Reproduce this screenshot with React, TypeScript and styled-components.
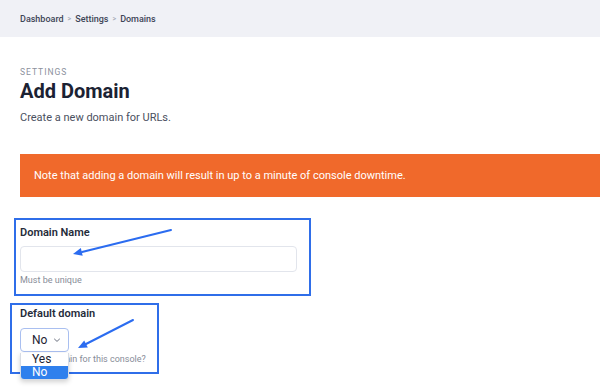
import React from "react";
import styled, { createGlobalStyle } from "styled-components";

const Global = createGlobalStyle`
  html, body { margin: 0; padding: 0; background: #ffffff; }
  body { font-family: Roboto, "Noto Sans", "Liberation Sans", sans-serif; color: #1c2233; }
  * { box-sizing: border-box; }
`;

const Page = styled.div`
  position: relative;
  width: 600px;
  height: 387px;
  overflow: hidden;
`;

const TopBar = styled.header`
  height: 37px;
  background: #f0f1f6;
  display: flex;
  align-items: center;
  padding-left: 20px;
  gap: 4px;
  font-size: 9px;
  font-weight: 500;
  color: #3e4556;
`;

const Crumb = styled.span``;

const Sep = styled.span`
  color: #a7acb8;
  font-size: 7px;
`;

const Main = styled.main`
  padding-left: 20px;
  display: flex;
  flex-direction: column;
`;

const Eyebrow = styled.div`
  margin-top: 30px;
  font-size: 8.5px;
  letter-spacing: 1px;
  color: #8b909c;
  text-transform: uppercase;
  line-height: 10px;
`;

const Title = styled.h1`
  margin: 2px 0 0;
  font-size: 20px;
  line-height: 24px;
  font-weight: 700;
  color: #1b2233;
`;

const Subtitle = styled.p`
  margin: 8px 0 0;
  font-size: 11px;
  line-height: 14px;
  color: #4a5060;
`;

const Banner = styled.div`
  margin-top: 29px;
  height: 43px;
  background: #f0692b;
  color: #ffffff;
  display: flex;
  align-items: center;
  padding-left: 14px;
  font-size: 11px;
`;

const Highlight = styled.div<{ $left: number; $top: number; $width: number; $pad: string }>`
  position: relative;
  margin-left: ${(p) => p.$left}px;
  margin-top: ${(p) => p.$top}px;
  width: ${(p) => p.$width}px;
  border: 2px solid #2f6ee9;
  padding: ${(p) => p.$pad};
  display: flex;
  flex-direction: column;
  align-items: flex-start;
`;

const Label = styled.label`
  font-size: 11px;
  line-height: 14px;
  font-weight: 600;
  color: #262c3a;
`;

const TextInput = styled.input`
  margin-top: 6px;
  width: 277px;
  height: 26px;
  border: 1px solid #e2e5ec;
  border-radius: 4px;
  outline: none;
  background: #fff;
`;

const Hint = styled.div<{ $gap: number }>`
  margin-top: ${(p) => p.$gap}px;
  font-size: 9px;
  line-height: 12px;
  color: #878c98;
  white-space: nowrap;
`;

const SelectWrap = styled.div`
  position: relative;
  margin-top: 7px;
`;

const SelectBox = styled.div`
  width: 49px;
  height: 24px;
  border: 1px solid #a9bff0;
  border-radius: 4px;
  display: flex;
  align-items: center;
  justify-content: space-between;
  padding: 0 7px 0 11px;
  font-size: 12px;
  color: #1e2432;
  background: #fff;
`;

const Menu = styled.ul`
  position: absolute;
  top: 25px;
  left: 0;
  width: 49px;
  margin: 0;
  padding: 0;
  list-style: none;
  background: #fff;
  border: 1px solid #d8dce4;
  border-top: none;
  border-radius: 0 0 4px 4px;
  box-shadow: 0 2px 5px rgba(0, 0, 0, 0.18);
  z-index: 2;
`;

const Option = styled.li<{ $active?: boolean }>`
  height: 13px;
  line-height: 13px;
  padding-left: 11px;
  font-size: 12px;
  color: ${(p) => (p.$active ? "#ffffff" : "#1e2432")};
  background: ${(p) => (p.$active ? "#2f80ed" : "transparent")};
  border-radius: ${(p) => (p.$active ? "0 0 3px 3px" : "0")};
`;

const Arrows = styled.svg`
  position: absolute;
  left: 0;
  top: 0;
  width: 600px;
  height: 387px;
  pointer-events: none;
  z-index: 5;
`;

function Chevron() {
  return (
    <svg width="8" height="6" viewBox="0 0 8 6">
      <path d="M1.2 1.8 L4 4.4 L6.8 1.8" fill="none" stroke="#6b7180" strokeWidth="1" />
    </svg>
  );
}

export default function App() {
  return (
    <Page>
      <Global />
      <TopBar>
        <Crumb>Dashboard</Crumb>
        <Sep>&gt;</Sep>
        <Crumb>Settings</Crumb>
        <Sep>&gt;</Sep>
        <Crumb>Domains</Crumb>
      </TopBar>
      <Main>
        <Eyebrow>Settings</Eyebrow>
        <Title>Add Domain</Title>
        <Subtitle>Create a new domain for URLs.</Subtitle>
        <Banner>Note that adding a domain will result in up to a minute of console downtime.</Banner>
        <Highlight $left={-6} $top={21} $width={297} $pad="6px 4px 8px 4px">
          <Label>Domain Name</Label>
          <TextInput />
          <Hint $gap={2}>Must be unique</Hint>
        </Highlight>
        <Highlight $left={-10} $top={7} $width={149} $pad="2px 8px 7px 8px">
          <Label>Default domain</Label>
          <SelectWrap>
            <SelectBox>
              <span>No</span>
              <Chevron />
            </SelectBox>
            <Menu>
              <Option>Yes</Option>
              <Option $active>No</Option>
            </Menu>
          </SelectWrap>
          <Hint $gap={1}>Set as domain for this console?</Hint>
        </Highlight>
      </Main>
      <Arrows viewBox="0 0 600 387">
        <line x1="171" y1="230" x2="82" y2="252" stroke="#2b6cf0" strokeWidth="2" strokeLinecap="round" />
        <polygon points="73,254 82.7,255.8 80.8,248" fill="#2b6cf0" />
        <line x1="133" y1="320" x2="86" y2="344" stroke="#2b6cf0" strokeWidth="2" strokeLinecap="round" />
        <polygon points="78,348 87.8,347.5 84.2,340.4" fill="#2b6cf0" />
      </Arrows>
    </Page>
  );
}
